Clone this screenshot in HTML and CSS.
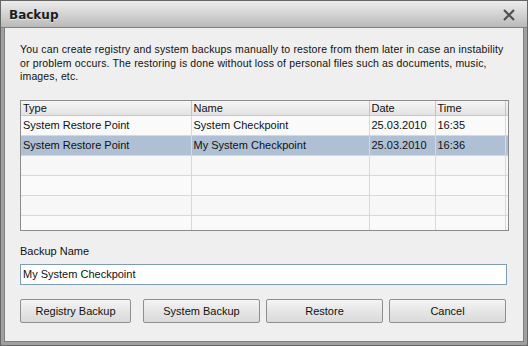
FILE: index.html
```html
<!DOCTYPE html>
<html lang="en">
<head>
    <meta charset="UTF-8">
    <title>Backup</title>
    <link rel="stylesheet" href="styles.css">
</head>
<body>
    <div class="window">
        <!-- Title Bar -->
        <div class="titlebar">
            <span class="title">Backup</span>
            <svg class="close" width="14" height="14" viewBox="0 0 14 14">
                <path d="M2 2 L12 12 M12 2 L2 12" stroke="#505050" stroke-width="2.2" fill="none"/>
            </svg>
        </div>

        <div class="content">
            <p class="intro">You can create registry and system backups manually to restore from them later in case an instability or problem occurs. The restoring is done without loss of personal files such as documents, music, images, etc.</p>

            <!-- Backup List -->
            <div class="list">
                <table class="grid">
                    <colgroup>
                        <col class="c-type">
                        <col class="c-name">
                        <col class="c-date">
                        <col class="c-time">
                        <col class="c-fill">
                    </colgroup>
                    <thead>
                        <tr>
                            <th>Type</th>
                            <th>Name</th>
                            <th>Date</th>
                            <th>Time</th>
                            <th></th>
                        </tr>
                    </thead>
                    <tbody>
                        <tr>
                            <td>System Restore Point</td>
                            <td>System Checkpoint</td>
                            <td>25.03.2010</td>
                            <td>16:35</td>
                            <td></td>
                        </tr>
                        <tr class="selected">
                            <td>System Restore Point</td>
                            <td>My System Checkpoint</td>
                            <td>25.03.2010</td>
                            <td>16:36</td>
                            <td></td>
                        </tr>
                        <tr class="alt"><td></td><td></td><td></td><td></td><td></td></tr>
                        <tr><td></td><td></td><td></td><td></td><td></td></tr>
                        <tr class="alt"><td></td><td></td><td></td><td></td><td></td></tr>
                        <tr><td></td><td></td><td></td><td></td><td></td></tr>
                    </tbody>
                </table>
            </div>

            <label class="name-label" for="backup-name">Backup Name</label>
            <input type="text" id="backup-name" class="name-input" value="My System Checkpoint">

            <div class="buttons">
                <button class="btn btn-registry">Registry Backup</button>
                <button class="btn btn-system">System Backup</button>
                <button class="btn">Restore</button>
                <button class="btn">Cancel</button>
            </div>
        </div>
    </div>
</body>
</html>
```

FILE: styles.css
```css
/* Global */
body {
    margin: 0;
    font-family: "Liberation Sans", sans-serif;
    font-size: 11px;
    color: #111;
}

/* Window Frame */
.window {
    width: 528px;
    height: 346px;
    box-sizing: border-box;
    background: #a0a0a0;
    border: 1px solid #666;
    display: flex;
    flex-direction: column;
}

.titlebar {
    background: linear-gradient(to bottom, #ececec, #d6d6d6 45%, #b9b9b9);
    display: flex;
    align-items: center;
    justify-content: space-between;
    padding: 1px 11px 0 8px;
    box-sizing: border-box;
    height: 27px;
    border-bottom: 1px solid #808080;
}

.title {
    font-family: "DejaVu Sans", sans-serif;
    font-weight: bold;
    font-size: 12px;
    color: #1c1c1c;
    text-shadow: 0 1px 0 rgba(255, 255, 255, 0.6);
}

.close {
    display: block;
}

/* Content Area */
.content {
    flex: 1;
    margin: 0 3px 3px;
    background: #efefef;
    border: 1px solid #808080;
    border-top: none;
    padding: 15px 14px 0 15px;
}

.intro {
    margin: 0;
    font-size: 10.5px;
    letter-spacing: 0.15px;
    line-height: 13.5px;
}

/* Backup List */
.list {
    margin-top: 16px;
    height: 131px;
    box-sizing: border-box;
    border: 1px solid #8c8c8c;
    background: #fff;
    overflow: hidden;
}

.grid {
    border-collapse: collapse;
    table-layout: fixed;
    width: 487px;
}

.c-type { width: 170px; }
.c-name { width: 178px; }
.c-date { width: 66px; }
.c-time { width: 70px; }
.c-fill { width: 3px; }

.grid th {
    height: 14px;
    padding: 0 2px;
    font-weight: normal;
    text-align: left;
    background: linear-gradient(to bottom, #f6f6f6, #e2e2e2);
    border-right: 1px solid #c4c4c4;
    border-bottom: 1px solid #c8c8c8;
}

.grid th:last-child {
    border-right: none;
}

.grid td {
    height: 19px;
    padding: 0 2px;
    white-space: nowrap;
    overflow: hidden;
    background: #fafafa;
    border-right: 1px solid #d8d8d8;
    border-bottom: 1px solid #d8d8d8;
}

.grid td:last-child {
    border-right: none;
}

.grid tr.alt td {
    background: #f7f7f7;
}

.grid tr.selected td {
    background: #afc0d4;
}

/* Backup Name */
.name-label {
    display: block;
    margin-top: 14px;
    line-height: 13px;
}

.name-input {
    display: block;
    width: 487px;
    height: 21px;
    box-sizing: border-box;
    margin-top: 6px;
    border: 1px solid #7f9db9;
    padding: 0 2px;
    font-family: inherit;
    font-size: 11px;
    color: #111;
    background: #fff;
    outline: none;
}

/* Buttons */
.buttons {
    display: flex;
    gap: 6px;
    margin-top: 14px;
}

.btn {
    width: 117px;
    height: 24px;
    border: 1px solid #8f8f8f;
    border-radius: 2px;
    background: linear-gradient(to bottom, #f4f4f4, #e6e6e6 50%, #dadada);
    font-family: inherit;
    font-size: 11px;
    color: #111;
    padding: 0;
}

.btn-registry {
    width: 111px;
    margin-right: 6px;
}
```
